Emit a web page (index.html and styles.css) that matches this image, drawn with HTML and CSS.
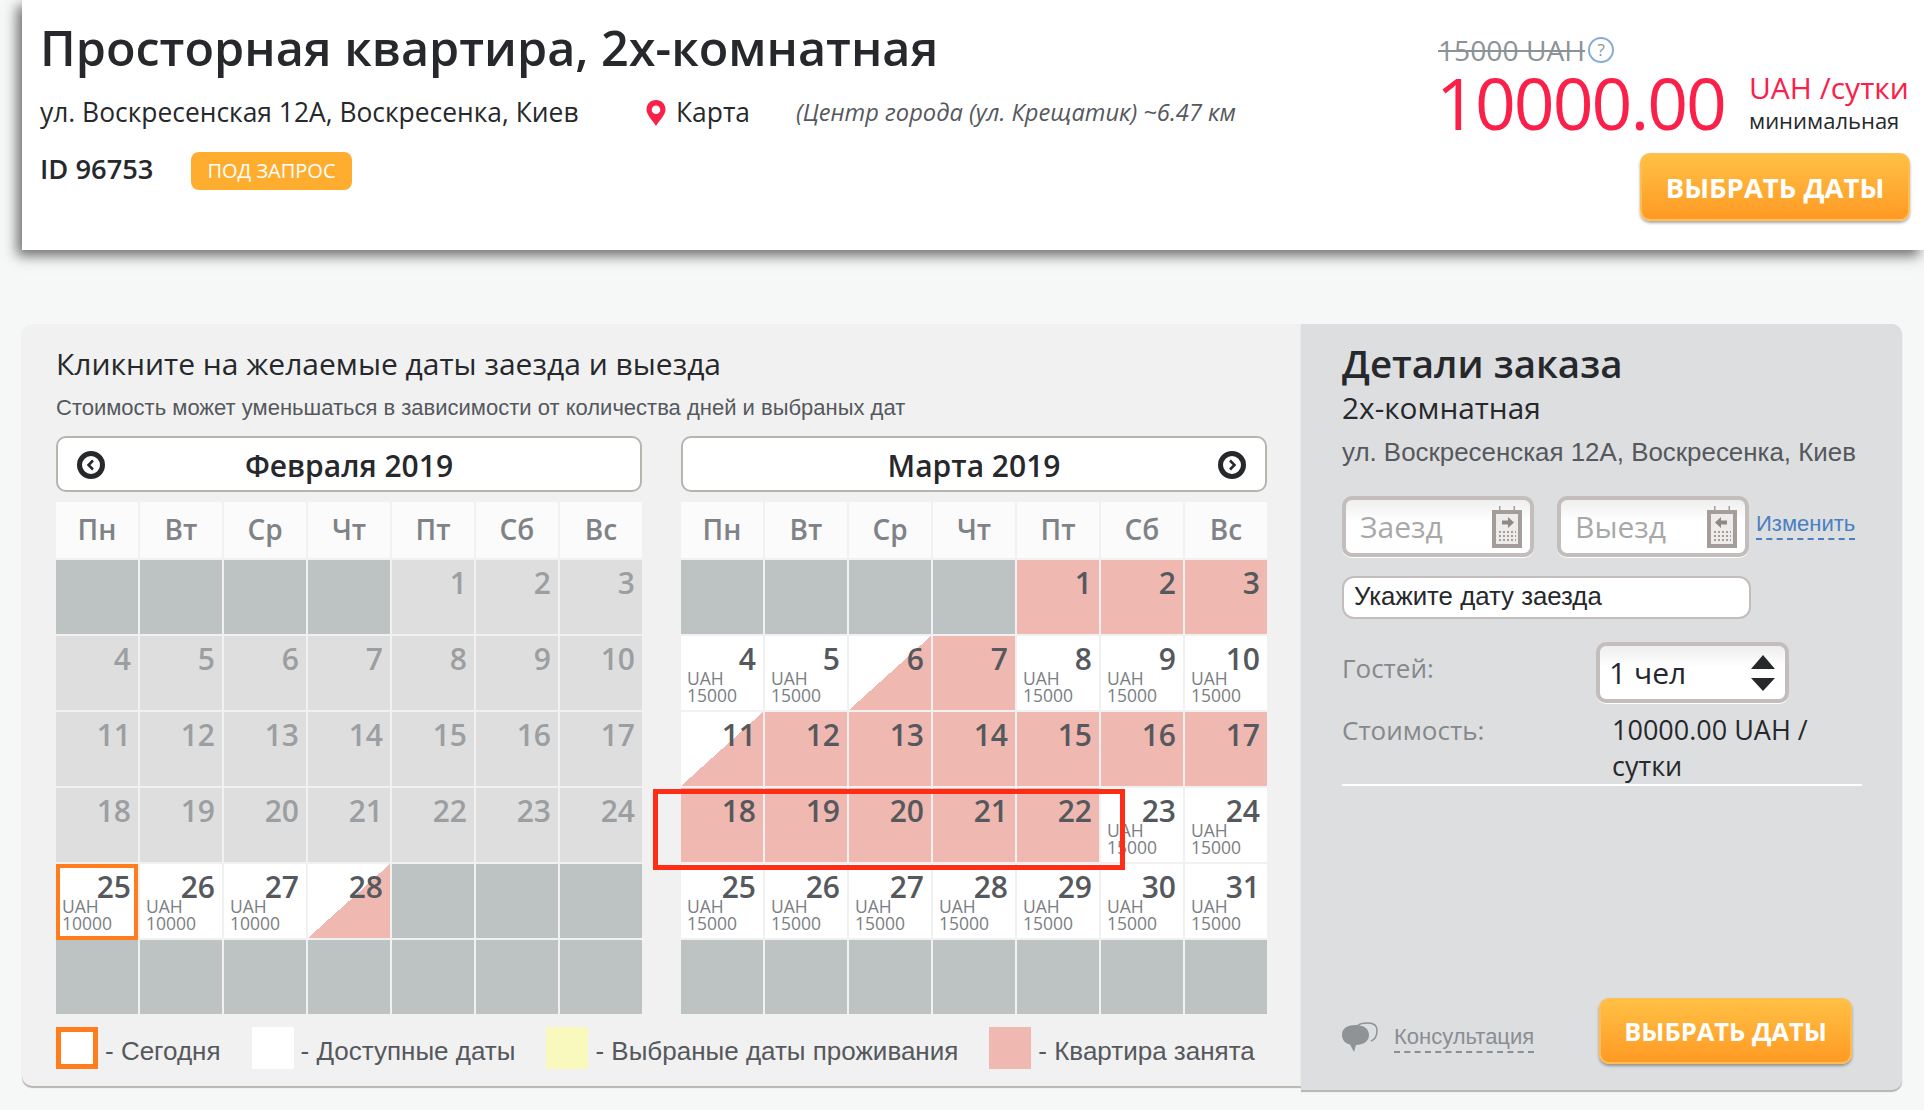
FILE: index.html
```html
<!DOCTYPE html>
<html lang="ru">
<head>
    <meta charset="UTF-8">
    <title>Просторная квартира, 2х-комнатная</title>
    <link rel="stylesheet" href="styles.css">
</head>
<body>
    <div class="top-card">
        <div class="top-info">
            <h1>Просторная квартира, 2х-комнатная</h1>
            <div class="address-row">
                <span class="address">ул. Воскресенская 12А, Воскресенка, Киев</span>
                <svg class="pin" viewBox="0 0 20 26"><path fill="#fb2049" fill-rule="evenodd" d="M10 0C4.500 0 .5 4 .5 9.500 .5 15 7 21 10 26c3-5 9.500-11 9.500-16.500C19.500 4 15.500 0 10 0zm0 5.500a4.300 4.300 0 1 1 0 8.600 4.300 4.300 0 0 1 0-8.600z"/></svg>
                <span class="map-link">Карта</span>
                <span class="distance">(Центр города (ул. Крещатик) ~6.47 км</span>
            </div>
            <div class="id-row">
                <span class="apt-id">ID 96753</span>
                <span class="badge">ПОД ЗАПРОС</span>
            </div>
        </div>
        <div class="top-price">
            <div class="old-price">
                <s>15000 UAH</s>
                <span class="help">?</span>
            </div>
            <div class="price-row">
                <span class="price">10000.00</span>
                <div class="price-unit">
                    <span class="per-day">UAH /сутки</span>
                    <span class="minimal">минимальная</span>
                </div>
            </div>
            <button class="button button-top">ВЫБРАТЬ ДАТЫ</button>
        </div>
    </div>

    <div class="booking">
        <div class="calendars">
            <h2>Кликните на желаемые даты заезда и выезда</h2>
            <p class="note">Стоимость может уменьшаться в зависимости от количества дней и выбраных дат</p>
            <div class="months">
                <div class="month">
                    <div class="month-head">
                        <svg class="arrow arrow-prev" viewBox="0 0 30 30"><circle cx="15" cy="15" r="11.500" fill="#fff" stroke="#26282c" stroke-width="5"/><path d="M17 10.500 12.500 15l4.500 4.500" fill="none" stroke="#26282c" stroke-width="2.500"/></svg>
                        Февраля 2019
                    </div>
                    <div class="days">
                        <div class="wd">Пн</div><div class="wd">Вт</div><div class="wd">Ср</div><div class="wd">Чт</div><div class="wd">Пт</div><div class="wd">Сб</div><div class="wd">Вс</div>
                        <div class="day none"></div><div class="day none"></div><div class="day none"></div><div class="day none"></div>
                        <div class="day past"><b>1</b></div><div class="day past"><b>2</b></div><div class="day past"><b>3</b></div>
                        <div class="day past"><b>4</b></div><div class="day past"><b>5</b></div><div class="day past"><b>6</b></div><div class="day past"><b>7</b></div><div class="day past"><b>8</b></div><div class="day past"><b>9</b></div><div class="day past"><b>10</b></div>
                        <div class="day past"><b>11</b></div><div class="day past"><b>12</b></div><div class="day past"><b>13</b></div><div class="day past"><b>14</b></div><div class="day past"><b>15</b></div><div class="day past"><b>16</b></div><div class="day past"><b>17</b></div>
                        <div class="day past"><b>18</b></div><div class="day past"><b>19</b></div><div class="day past"><b>20</b></div><div class="day past"><b>21</b></div><div class="day past"><b>22</b></div><div class="day past"><b>23</b></div><div class="day past"><b>24</b></div>
                        <div class="day today"><b>25</b><small>UAH<br>10000</small></div>
                        <div class="day"><b>26</b><small>UAH<br>10000</small></div>
                        <div class="day"><b>27</b><small>UAH<br>10000</small></div>
                        <div class="day half"><b>28</b></div>
                        <div class="day none"></div><div class="day none"></div><div class="day none"></div>
                        <div class="day none"></div><div class="day none"></div><div class="day none"></div><div class="day none"></div><div class="day none"></div><div class="day none"></div><div class="day none"></div>
                    </div>
                </div>
                <div class="month">
                    <div class="month-head">
                        Марта 2019
                        <svg class="arrow arrow-next" viewBox="0 0 30 30"><circle cx="15" cy="15" r="11.500" fill="#fff" stroke="#26282c" stroke-width="5"/><path d="M13 10.500 17.500 15 13 19.500" fill="none" stroke="#26282c" stroke-width="2.500"/></svg>
                    </div>
                    <div class="days">
                        <div class="wd">Пн</div><div class="wd">Вт</div><div class="wd">Ср</div><div class="wd">Чт</div><div class="wd">Пт</div><div class="wd">Сб</div><div class="wd">Вс</div>
                        <div class="day none"></div><div class="day none"></div><div class="day none"></div><div class="day none"></div>
                        <div class="day busy"><b>1</b></div><div class="day busy"><b>2</b></div><div class="day busy"><b>3</b></div>
                        <div class="day"><b>4</b><small>UAH<br>15000</small></div>
                        <div class="day"><b>5</b><small>UAH<br>15000</small></div>
                        <div class="day half"><b>6</b></div>
                        <div class="day busy"><b>7</b></div>
                        <div class="day"><b>8</b><small>UAH<br>15000</small></div>
                        <div class="day"><b>9</b><small>UAH<br>15000</small></div>
                        <div class="day"><b>10</b><small>UAH<br>15000</small></div>
                        <div class="day half"><b>11</b></div>
                        <div class="day busy"><b>12</b></div><div class="day busy"><b>13</b></div><div class="day busy"><b>14</b></div><div class="day busy"><b>15</b></div><div class="day busy"><b>16</b></div><div class="day busy"><b>17</b></div>
                        <div class="day busy"><b>18</b></div><div class="day busy"><b>19</b></div><div class="day busy"><b>20</b></div><div class="day busy"><b>21</b></div><div class="day busy"><b>22</b></div>
                        <div class="day"><b>23</b><small>UAH<br>15000</small></div>
                        <div class="day"><b>24</b><small>UAH<br>15000</small></div>
                        <div class="day"><b>25</b><small>UAH<br>15000</small></div>
                        <div class="day"><b>26</b><small>UAH<br>15000</small></div>
                        <div class="day"><b>27</b><small>UAH<br>15000</small></div>
                        <div class="day"><b>28</b><small>UAH<br>15000</small></div>
                        <div class="day"><b>29</b><small>UAH<br>15000</small></div>
                        <div class="day"><b>30</b><small>UAH<br>15000</small></div>
                        <div class="day"><b>31</b><small>UAH<br>15000</small></div>
                        <div class="day none"></div><div class="day none"></div><div class="day none"></div><div class="day none"></div><div class="day none"></div><div class="day none"></div><div class="day none"></div>
                    </div>
                    <div class="highlight"></div>
                </div>
            </div>
            <div class="legend">
                <i class="swatch swatch-today"></i><span class="legend-text">- Сегодня</span>
                <i class="swatch swatch-free"></i><span class="legend-text">- Доступные даты</span>
                <i class="swatch swatch-chosen"></i><span class="legend-text">- Выбраные даты проживания</span>
                <i class="swatch swatch-busy"></i><span class="legend-text">- Квартира занята</span>
            </div>
        </div>

        <div class="order">
            <h3>Детали заказа</h3>
            <div class="order-type">2х-комнатная</div>
            <div class="order-address">ул. Воскресенская 12А, Воскресенка, Киев</div>
            <div class="date-row">
                <div class="field date-field">
                    <span class="placeholder">Заезд</span>
                    <svg class="cal-icon" viewBox="0 0 30 42"><path d="M7 0h1.500v5H7zM21.500 0H23v5h-1.500z" fill="#a49d99"/><rect y="4" width="30" height="38" fill="#a49d99"/><rect x="4" y="8" width="22" height="30" fill="#eeecea"/><path d="M10 14.500h6V11l6 5.500-6 5.500v-3.500h-6z" fill="#8f8985"/><path d="M7 25h2v2H7zm4 0h2v2h-2zm4 0h2v2h-2zm4 0h2v2h-2zm4 0h1v2h-1zM7 29h2v2H7zm4 0h2v2h-2zm4 0h2v2h-2zm4 0h2v2h-2zm4 0h1v2h-1zM7 33h2v2H7zm4 0h2v2h-2zm4 0h2v2h-2zm4 0h2v2h-2zm4 0h1v2h-1z" fill="#a49d99"/></svg>
                </div>
                <div class="field date-field">
                    <span class="placeholder">Выезд</span>
                    <svg class="cal-icon" viewBox="0 0 30 42"><path d="M7 0h1.500v5H7zM21.500 0H23v5h-1.500z" fill="#a49d99"/><rect y="4" width="30" height="38" fill="#a49d99"/><rect x="4" y="8" width="22" height="30" fill="#eeecea"/><path d="M20 14.500h-6V11l-6 5.500 6 5.500v-3.500h6z" fill="#8f8985"/><path d="M7 25h2v2H7zm4 0h2v2h-2zm4 0h2v2h-2zm4 0h2v2h-2zm4 0h1v2h-1zM7 29h2v2H7zm4 0h2v2h-2zm4 0h2v2h-2zm4 0h2v2h-2zm4 0h1v2h-1zM7 33h2v2H7zm4 0h2v2h-2zm4 0h2v2h-2zm4 0h2v2h-2zm4 0h1v2h-1z" fill="#a49d99"/></svg>
                </div>
                <a class="change-link">Изменить</a>
            </div>
            <div class="status">Укажите дату заезда</div>
            <div class="guests-row">
                <span class="row-label guests-label">Гостей:</span>
                <div class="field guests-field">
                    <span>1 чел</span>
                    <span class="spinner"><i class="spin-up"></i><i class="spin-down"></i></span>
                </div>
            </div>
            <div class="cost-row">
                <span class="row-label">Стоимость:</span>
                <span class="cost">10000.00 UAH / сутки</span>
            </div>
            <div class="order-foot">
                <svg class="chat-icon" viewBox="0 0 36 30"><path d="M16 3.500c1.500-2 4-2.500 10-2.500 6 0 9 2 9 7.500 0 5-2 9-6 10.500" fill="none" stroke="#8f9395" stroke-width="1.500"/><path d="M14 3C6 3 0 6 0 12.500 0 18 3 21.500 8 22.500L12 30l2-7c7 0 13-3.500 13-10S21.500 3 14 3z" fill="#8f9395"/></svg>
                <a class="consult-link">Консультация</a>
                <button class="button button-order">ВЫБРАТЬ ДАТЫ</button>
            </div>
        </div>
    </div>
</body>
</html>
```

FILE: styles.css
```css
:root {
    --busy-color: #efb8b0;
    --none-color: #bdc3c3;
    --past-color: #dedede;
    --red-color: #fb2049;
    --field-border: #c3bdbb;
}

* {
    box-sizing: border-box;
}

body {
    margin: 0;
    height: 1110px;
    overflow: hidden;
    background-color: #f6f8f7;
    font-family: "Open Sans", sans-serif;
    color: #26282c;
}

/* top card */
.top-card {
    display: flex;
    justify-content: space-between;
    height: 250px;
    margin-left: 22px;
    padding: 17px 14px 0 18px;
    background-color: #fff;
    box-shadow: -5px 6px 12px rgba(0,0,0,0.55);
}

h1 {
    margin: 0;
    font-size: 48.500px;
    font-weight: 600;
    line-height: 60px;
    white-space: nowrap;
}

.address-row {
    display: flex;
    align-items: center;
    height: 40px;
    margin-top: 15px;
    font-size: 26.400px;
}

.address {
    width: 606px;
    white-space: nowrap;
}

.pin {
    width: 20px;
    height: 26px;
    margin: 2px 10px 0 0;
}

.map-link {
    width: 120px;
}

.distance {
    font-size: 23.700px;
    font-style: italic;
    color: #55585d;
    white-space: nowrap;
}

.id-row {
    display: flex;
    align-items: center;
    margin-top: 20px;
}

.apt-id {
    width: 151px;
    margin-top: -6px;
    font-size: 27.300px;
    font-weight: 600;
}

.badge {
    width: 161px;
    height: 38px;
    border-radius: 8px;
    background-color: #ffad2f;
    color: #fff;
    font-size: 20px;
    line-height: 38px;
    text-align: center;
}

.top-price {
    display: flex;
    flex-direction: column;
    width: 472px;
}

.old-price {
    display: flex;
    align-items: center;
    height: 36px;
    margin-top: 15px;
    font-size: 28.200px;
    color: #8c9396;
}

.help {
    width: 26px;
    height: 26px;
    margin-left: 3px;
    border: 2px solid #86acd8;
    border-radius: 50%;
    font-size: 17px;
    line-height: 22px;
    text-align: center;
}

.price-row {
    display: flex;
    margin-top: -4px;
}

.price {
    width: 311px;
    margin-left: -2px;
    margin-right: 2px;
    font-size: 71.500px;
    line-height: 78px;
    color: var(--red-color);
    letter-spacing: -2px;
}

.price-unit {
    display: flex;
    flex-direction: column;
    padding-top: 6px;
    white-space: nowrap;
}

.per-day {
    font-size: 30px;
    line-height: 36px;
    color: var(--red-color);
}

.minimal {
    font-size: 22px;
    line-height: 29px;
}

.button {
    border: 2px solid #ffbd52;
    border-radius: 10px;
    background: linear-gradient(#ffc044, #ff9a24);
    box-shadow: 0 2px 3px rgba(0,0,0,0.35);
    color: #fff;
    font-family: inherit;
    font-weight: 700;
    font-size: 27.500px;
    cursor: pointer;
}

.button-top {
    align-self: flex-end;
    width: 270px;
    height: 68px;
    margin-top: 11px;
}

/* booking block */
.booking {
    display: flex;
    width: 1880px;
    margin: 74px 0 0 22px;
}

.calendars {
    position: relative;
    width: 1279px;
    height: 762px;
    padding: 0 34px;
    border-radius: 10px 0 0 10px;
    background-color: #f1f1f1;
    box-shadow: 0 2px 1px #b8b4b0;
}

h2 {
    margin: 0;
    padding-top: 16px;
    font-size: 30px;
    font-weight: 400;
    line-height: 48px;
}

.note {
    margin: 0;
    padding-top: 4px;
    font-family: "Liberation Sans", sans-serif;
    font-size: 22px;
    line-height: 31px;
    color: #55585d;
}

.months {
    display: flex;
    gap: 39px;
    margin-top: 13px;
}

.month {
    position: relative;
    width: 586px;
}

.month-head {
    display: flex;
    align-items: center;
    justify-content: center;
    position: relative;
    height: 56px;
    padding-top: 3px;
    border: 2px solid #b8b4ae;
    border-radius: 10px;
    background-color: #fff;
    font-size: 30px;
    font-weight: 600;
}

.arrow {
    position: absolute;
    top: 12px;
    width: 30px;
    height: 30px;
}

.arrow-prev {
    left: 18px;
}

.arrow-next {
    right: 18px;
}

.days {
    display: grid;
    grid-template-columns: repeat(7, 82px);
    grid-template-rows: 56px repeat(6, 74px);
    gap: 2px;
    margin-top: 10px;
}

.wd {
    background-color: #fbfbfb;
    color: #7f8387;
    font-size: 28px;
    font-weight: 600;
    line-height: 54px;
    text-align: center;
}

.day {
    padding: 0 7px 0 6px;
    background-color: #fff;
    color: #55585d;
}

.day b {
    display: block;
    font-size: 30px;
    font-weight: 600;
    line-height: 40px;
    margin-top: 3px;
    text-align: right;
}

.day small {
    display: block;
    margin-top: -9px;
    font-size: 17.500px;
    font-weight: 500;
    line-height: 17px;
    color: #7b7e82;
}

.none {
    background-color: var(--none-color);
}

.past {
    background-color: var(--past-color);
    color: #9c9fa2;
}

.busy {
    background-color: var(--busy-color);
}

.half {
    background: linear-gradient(to bottom right, #fff 50%, var(--busy-color) 50%);
}

.today {
    margin-bottom: -2px;
    outline: 4px solid #ff7d1c;
    outline-offset: -4px;
}

.highlight {
    position: absolute;
    left: -28px;
    top: 353px;
    width: 472px;
    height: 81px;
    border: 5px solid #ff2d16;
}

.legend {
    display: flex;
    align-items: center;
    margin-top: 13px;
    font-family: "Liberation Sans", sans-serif;
    font-size: 26px;
    color: #55585d;
}

.swatch {
    flex: none;
    width: 42px;
    height: 42px;
    margin-right: 7px;
}

.swatch-today {
    border: 5px solid #ff7d1c;
    background-color: #fff;
}

.swatch-free {
    background-color: #fff;
}

.swatch-chosen {
    background-color: #f9f9bd;
}

.swatch-busy {
    background-color: var(--busy-color);
}

.legend-text {
    margin-right: 31px;
    padding-top: 6px;
    white-space: nowrap;
}

/* order panel */
.order {
    position: relative;
    display: flex;
    flex-direction: column;
    width: 601px;
    height: 766px;
    padding: 14px 41px 0;
    border-radius: 0 10px 10px 0;
    background-color: #dddee0;
    box-shadow: 0 2px 1px #b8b4b0;
}

h3 {
    margin: 0;
    font-size: 38.500px;
    font-weight: 600;
    line-height: 50px;
}

.order-type {
    padding-top: 1px;
    font-size: 29.800px;
    line-height: 38px;
}

.order-address {
    margin-top: 7px;
    font-family: "Liberation Sans", sans-serif;
    font-size: 25.900px;
    line-height: 36px;
    color: #55585d;
    white-space: nowrap;
}

.date-row {
    display: flex;
    align-items: center;
    margin-top: 26px;
}

.field {
    display: flex;
    align-items: center;
    justify-content: space-between;
    height: 61px;
    border: 4px solid var(--field-border);
    border-radius: 10px;
    background: linear-gradient(#eee, #fff 40%);
    box-shadow: 0 1px 0 #fff;
}

.date-field {
    flex: none;
    width: 192px;
    margin-right: 23px;
    padding: 0 8px 0 14px;
}

.date-field + .date-field {
    margin-right: 7px;
}

.placeholder {
    font-size: 30px;
    color: #a8a8a8;
}

.cal-icon {
    width: 30px;
    height: 42px;
}

.change-link {
    margin-top: -4px;
    font-family: "Liberation Sans", sans-serif;
    font-size: 22px;
    line-height: 28px;
    color: #4a7fc1;
    border-bottom: 2px dashed #4a7fc1;
}

.status {
    width: 409px;
    height: 43px;
    margin-top: 19px;
    padding-left: 10px;
    border: 2px solid var(--field-border);
    border-radius: 12px;
    background-color: #fff;
    font-family: "Liberation Sans", sans-serif;
    font-size: 25.800px;
    line-height: 37px;
}

.guests-row {
    display: flex;
    align-items: center;
    margin-top: 23px;
}

.row-label {
    flex: none;
    width: 254px;
    font-size: 26px;
    color: #85898c;
}

.guests-label {
    margin-top: -10px;
}

.guests-field {
    width: 193px;
    padding: 0 10px 0 9px;
    font-size: 30px;
}

.spinner {
    display: flex;
    flex-direction: column;
    gap: 9px;
}

.spinner i {
    width: 0;
    height: 0;
    border-left: 12px solid transparent;
    border-right: 12px solid transparent;
}

.spin-up {
    border-bottom: 14px solid #26282c;
}

.spin-down {
    border-top: 13px solid #26282c;
}

.cost-row {
    display: flex;
    align-items: flex-start;
    margin-top: 9px;
    border-bottom: 2px solid #fff;
    width: 520px;
}

.cost-row .row-label {
    width: 270px;
    line-height: 36px;
}

.cost {
    width: 210px;
    font-size: 27px;
    line-height: 36px;
}

.order-foot {
    display: flex;
    align-items: flex-end;
    position: absolute;
    left: 41px;
    top: 674px;
    width: 510px;
}

.chat-icon {
    flex: none;
    width: 36px;
    height: 30px;
    margin-bottom: 12px;
}

.consult-link {
    margin: 0 65px 11px 16px;
    font-family: "Liberation Sans", sans-serif;
    font-size: 22px;
    line-height: 28px;
    color: #8a8e91;
    border-bottom: 2px dashed #8a8e91;
}

.button-order {
    width: 254px;
    height: 66px;
    font-size: 25.500px;
}
```
